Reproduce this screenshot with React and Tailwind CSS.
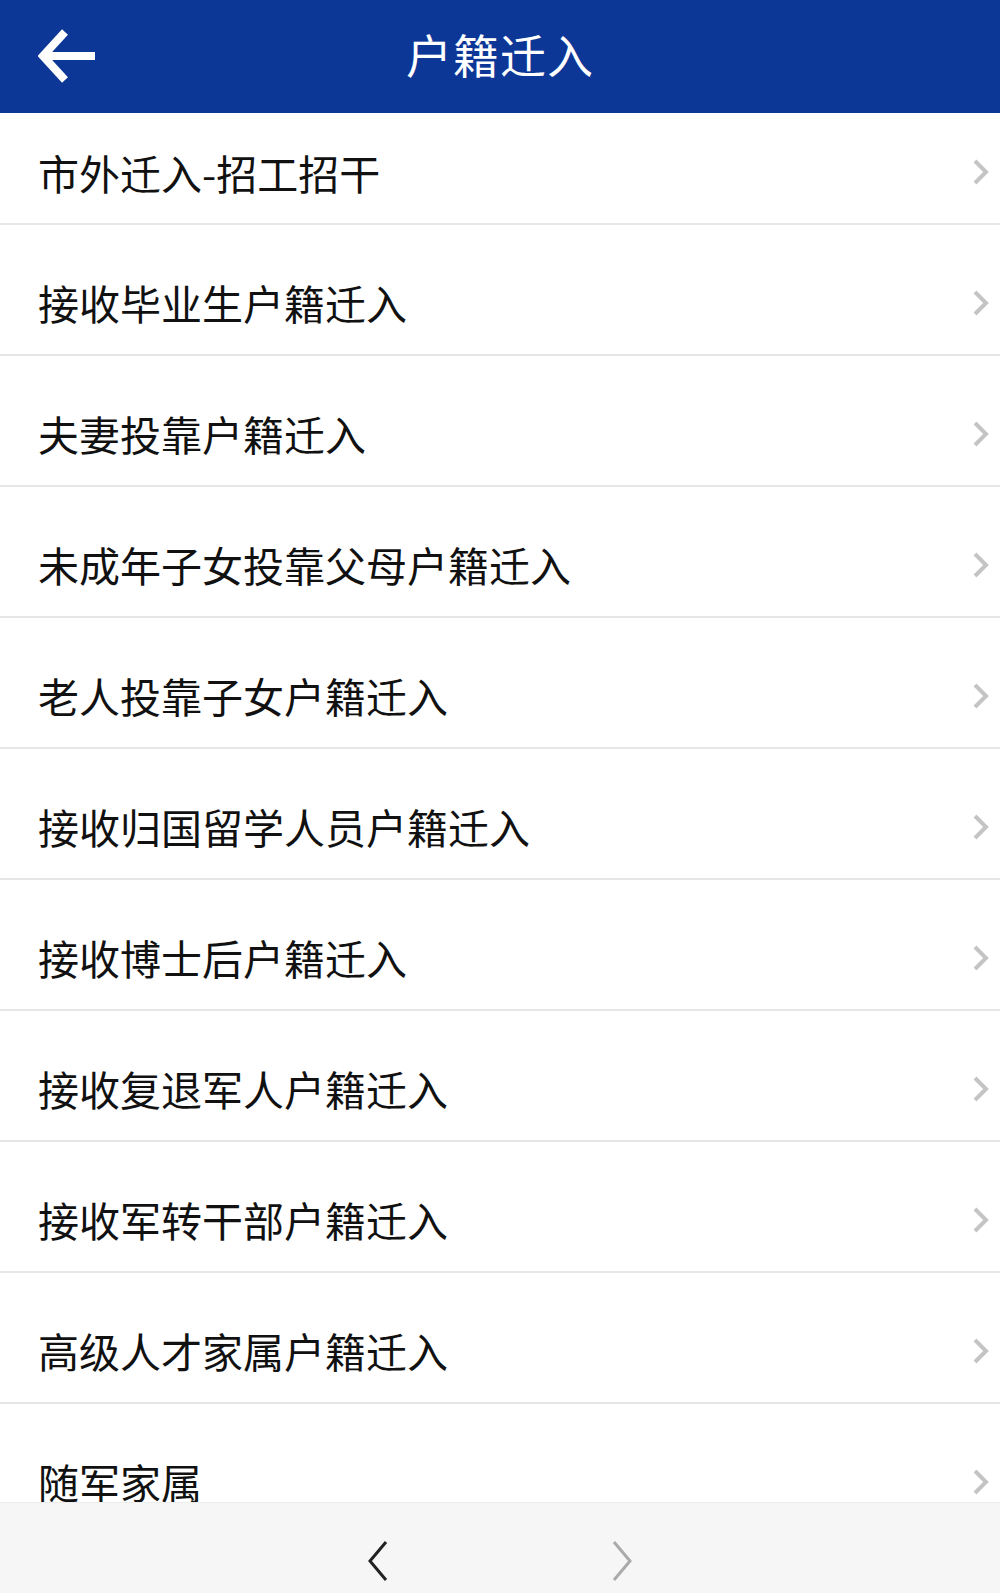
const items = [
  "市外迁入-招工招干",
  "接收毕业生户籍迁入",
  "夫妻投靠户籍迁入",
  "未成年子女投靠父母户籍迁入",
  "老人投靠子女户籍迁入",
  "接收归国留学人员户籍迁入",
  "接收博士后户籍迁入",
  "接收复退军人户籍迁入",
  "接收军转干部户籍迁入",
  "高级人才家属户籍迁入",
  "随军家属",
];

function Chevron({ className }) {
  return (
    <svg width="18" height="28" viewBox="0 0 18 28" className={className}>
      <path d="M3 3 L14 14 L3 25" fill="none" stroke="currentColor" strokeWidth="4" />
    </svg>
  );
}

function App() {
  return (
    <div
      className="flex h-[1593px] w-[1000px] flex-col overflow-hidden bg-white"
      style={{ fontFamily: '"Noto Sans CJK SC", "Noto Sans", sans-serif' }}
    >
      <header className="relative flex h-[113px] shrink-0 items-center justify-center bg-[#0d3797] pb-[8px]">
        <button className="absolute left-[34px] top-[24px] p-1">
          <svg width="60" height="56" viewBox="0 0 60 56">
            <path
              d="M27 4 L5 28 L27 52 M5 28 H57"
              fill="none"
              stroke="white"
              strokeWidth="8"
              strokeLinejoin="miter"
            />
          </svg>
        </button>
        <h1 className="text-[46px] font-normal leading-none tracking-[1px] text-white">户籍迁入</h1>
      </header>

      <ul className="h-[1389px] shrink-0 overflow-hidden">
        {items.map((item, i) => (
          <li
            key={item}
            className={
              i === 0
                ? "flex h-[112px] items-center justify-between border-b-2 border-[#e6e6e6] pl-[38px] pr-[10px] pt-[8px]"
                : "flex h-[131px] items-center justify-between border-b-2 border-[#e6e6e6] pl-[38px] pr-[10px] pt-[26px]"
            }
          >
            <span className="text-[41px] leading-none text-[#111]">{item}</span>
            <Chevron className="text-[#c4c4c4]" />
          </li>
        ))}
      </ul>

      <footer className="flex h-[91px] shrink-0 items-center justify-center gap-[220px] border-t border-[#ececec] bg-[#f6f6f6] pt-[26px]">
        <svg width="24" height="42" viewBox="0 0 24 42" className="text-[#222]">
          <path d="M20 2 L4 21 L20 40" fill="none" stroke="currentColor" strokeWidth="3" />
        </svg>
        <svg width="24" height="42" viewBox="0 0 24 42" className="text-[#aaa]">
          <path d="M4 2 L20 21 L4 40" fill="none" stroke="currentColor" strokeWidth="3" />
        </svg>
      </footer>
    </div>
  );
}

export default App;
